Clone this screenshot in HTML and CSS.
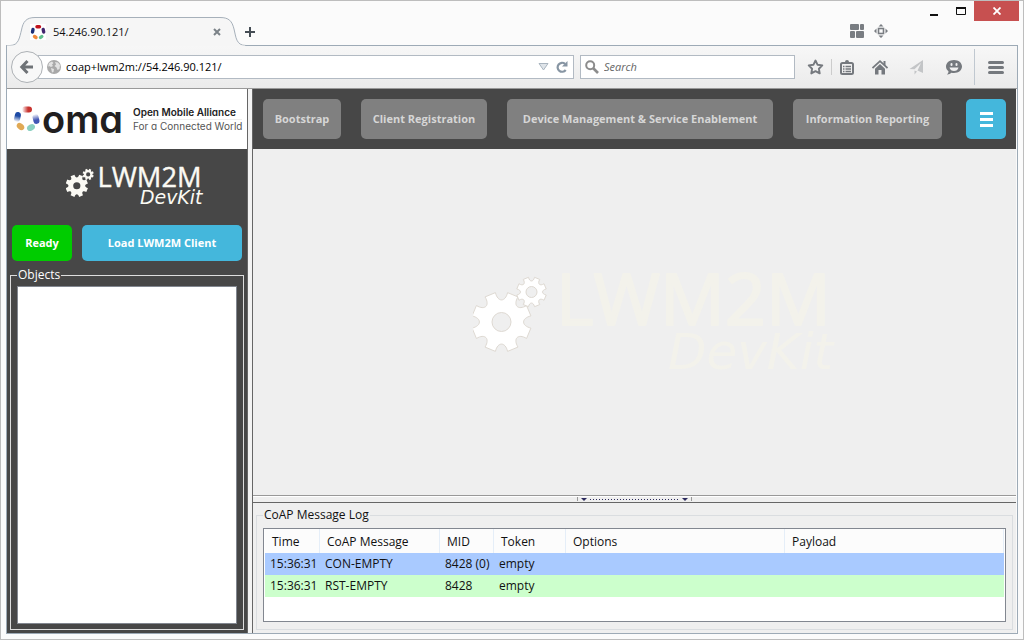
FILE: index.html
```html
<!DOCTYPE html>
<html lang="en">
<head>
<meta charset="utf-8">
<title>54.246.90.121/</title>
<link rel="stylesheet" href="styles.css">
</head>
<body>
<div class="window">
  <header class="titlebar">
    <div class="tab">
      <svg class="tab-shape" width="240" height="29" viewBox="0 0 240 29" aria-hidden="true"><path d="M0 28.5H4C13 28.5 13.500 20 15.500 13C17 5 20 .5 29 .5H214C223 .5 226 4 228 12C230 20 230 28.500 240 28.500V30H0Z" fill="#f6f6f6" stroke="#a6b0ba"/><path d="M1 29H239" stroke="#f6f6f6" stroke-width="1.200"/></svg>
      <svg class="favicon" width="16" height="16" viewBox="0 0 16 16" aria-hidden="true"><rect width="16" height="16" fill="#fff"/><g fill="none" stroke-width="3.400" stroke-linecap="round"><path d="M7 2.700H9.500" stroke="#c1121c"/><path d="M3 5.500L2.500 8" stroke="#1c2f78"/><path d="M13.200 5.500L13.700 8" stroke="#42256e"/><path d="M4.500 12.500L6 13.500" stroke="#f08a3c"/><path d="M11.800 12.500L10.500 13.500" stroke="#5fc08d"/></g></svg>
      <span class="tab-title">54.246.90.121/</span>
      <button class="plain tab-close" aria-label="Close tab"><svg width="8" height="8" viewBox="0 0 8 8"><path d="M1 1L7 7M7 1L1 7" stroke="#7b8288" stroke-width="2"/></svg></button>
    </div>
    <button class="plain new-tab" aria-label="New tab"><svg width="10" height="10" viewBox="0 0 10 10"><path d="M5 0V10M0 5H10" stroke="#454d55" stroke-width="2"/></svg></button>
    <div class="title-right">
      <div class="window-controls">
        <button class="plain" aria-label="Minimize"><svg width="8" height="10" viewBox="0 0 8 10"><path d="M0 9H8" stroke="#111" stroke-width="2"/></svg></button>
        <button class="plain" aria-label="Maximize"><svg width="10" height="8" viewBox="0 0 10 8"><path d="M.5 0V7.500H9.500V0" fill="none" stroke="#111"/><path d="M0 1H10" stroke="#111" stroke-width="2"/></svg></button>
        <button class="plain window-close" aria-label="Close"><svg width="8" height="8" viewBox="0 0 8 8"><path d="M.5 .5L7.500 7.500M7.500 .5L.5 7.500" stroke="#fff" stroke-width="1.800"/></svg></button>
      </div>
      <div class="tab-tools">
        <button class="plain" aria-label="Tab groups"><svg width="14" height="14" viewBox="0 0 14 14" fill="#797d82"><rect width="9" height="6" rx="1"/><rect x="10" width="4" height="6" rx="1"/><rect y="7" width="5" height="7" rx="1"/><rect x="6" y="7" width="8" height="7" rx="1"/></svg></button>
        <button class="plain" aria-label="Fit window"><svg width="14" height="14" viewBox="0 0 14 14" fill="#797d82"><rect x="4.500" y="4.500" width="5" height="5" fill="none" stroke="#797d82" stroke-width="1.600"/><path d="M7 0L9.500 2.500H4.500ZM7 14L9.500 11.500H4.500ZM0 7L2.500 4.500V9.500ZM14 7L11.500 4.500V9.500Z"/></svg></button>
      </div>
    </div>
  </header>

  <div class="frame">
    <div class="toolbar">
      <button class="plain back" aria-label="Back"><svg width="16" height="16" viewBox="0 0 16 16"><path d="M8.500 2L2.800 8L8.500 14M3.500 8H14" fill="none" stroke="#6f7377" stroke-width="3"/></svg></button>
      <div class="field urlbar">
        <svg width="14" height="14" viewBox="0 0 14 14" aria-hidden="true"><circle cx="7" cy="7" r="7" fill="#a9a9a9"/><path d="M2 3L5 1.500L6.500 3L5 4.500L6 6L4 7L2 6L1 7ZM8 2L11 2.500L13 5L12.500 9L10.500 10L9.500 7.500L7.500 6L9 4.500ZM4 8L7 9L6.500 12L5 12.500Z" fill="#e2e2e2"/></svg>
        <input type="text" aria-label="Address" value="coap+lwm2m://54.246.90.121/">
        <button class="plain" aria-label="Show history"><svg width="11" height="8" viewBox="0 0 11 8"><path d="M1 .5H10L5.500 7Z" fill="#dfe4e9" stroke="#a9b4bf"/></svg></button>
        <button class="plain reload" aria-label="Reload"><svg width="12" height="12" viewBox="0 0 12 12"><path d="M9 2.800A4.500 4.500 0 1 0 9.700 9" fill="none" stroke="#8795a3" stroke-width="2.200"/><path d="M11.500 0V5.500H6Z" fill="#8795a3"/></svg></button>
      </div>
      <div class="field search">
        <svg width="14" height="14" viewBox="0 0 14 14" aria-hidden="true"><circle cx="5.200" cy="5.200" r="4" fill="none" stroke="#8c8c8c" stroke-width="2"/><path d="M8 8L13 13" stroke="#8c8c8c" stroke-width="2.600"/></svg>
        <input type="text" aria-label="Search" placeholder="Search">
      </div>
      <button class="plain tool-small" aria-label="Bookmark"><svg width="17" height="16" viewBox="0 0 17 16"><path d="M8.500 1.500L10.600 5.800L15.300 6.400L11.900 9.700L12.700 14.400L8.500 12.200L4.300 14.400L5.100 9.700L1.700 6.400L6.400 5.800Z" fill="none" stroke="#75797e" stroke-width="1.900" stroke-linejoin="round"/></svg></button>
      <span class="sep-small"></span>
      <button class="plain tool-small" aria-label="Bookmarks list"><svg width="14" height="15" viewBox="0 0 14 15"><rect x="1" y="3" width="12" height="11" rx="1.500" fill="none" stroke="#75797e" stroke-width="2"/><path d="M3 2H5Q5 0 7 0T9 2H11V4H3Z" fill="#75797e"/><path d="M3 6.500H4.500M5.500 6.500H11M3 9H4.500M5.500 9H11M3 11.500H4.500M5.500 11.500H11" stroke="#75797e" stroke-width="1.300"/></svg></button>
      <button class="plain tool" aria-label="Home"><svg width="16" height="15" viewBox="0 0 16 15"><path d="M.5 8L8 1.200L15.500 8" fill="none" stroke="#75797e" stroke-width="1.700"/><path d="M11.500 1H13.500V5H11.500ZM8 4L13 8.700V14.500H9.500V10H6.500V14.500H3V8.700Z" fill="#75797e"/></svg></button>
      <button class="plain tool" aria-label="Share"><svg width="15" height="15" viewBox="0 0 15 15"><path d="M14 0V13L8.500 10.500L12 3L5.500 9.300L.5 9Z" fill="#c3c5c7"/><path d="M5.500 10.500L8 11.500L5.500 14.500Z" fill="#c3c5c7"/></svg></button>
      <button class="plain tool" aria-label="Chat"><svg width="16" height="15" viewBox="0 0 16 15"><path d="M8 0C12.500 0 16 2.800 16 6.500S12.500 13 8 13C7 13 6.300 13 5.500 12.700Q3.500 14.700 1 14.500Q2.700 13 2.500 11.200C1 10 0 8.500 0 6.500C0 2.800 3.500 0 8 0Z" fill="#75797e"/><rect x="4.500" y="3" width="2" height="3" rx="1" fill="#f0f0f0"/><rect x="9.500" y="3" width="2" height="3" rx="1" fill="#f0f0f0"/><path d="M3.500 7.500H12.500Q11.500 11 8 11T3.500 7.500Z" fill="#f0f0f0"/></svg></button>
      <span class="sep-tall"></span>
      <button class="plain tool-menu" aria-label="Open menu"><svg width="16" height="13" viewBox="0 0 16 13"><path d="M1.500 1.500H14.500M1.500 6.500H14.500M1.500 11.500H14.500" stroke="#75797e" stroke-width="3" stroke-linecap="round"/></svg></button>
    </div>

    <div class="page">
      <aside class="sidebar">
        <div class="oma">
          <svg width="26" height="26" viewBox="0 0 26 26" aria-hidden="true">
            <defs>
              <linearGradient id="red" x1="0" x2="1"><stop offset="0" stop-color="#fff"/><stop offset=".6" stop-color="#c8342f"/></linearGradient>
              <linearGradient id="blue" x1="0" y1="1" x2="0" y2="0"><stop offset="0" stop-color="#fff"/><stop offset=".6" stop-color="#1d4ba5"/></linearGradient>
              <linearGradient id="navy" x1="0" y1="0" x2="0" y2="1"><stop offset="0" stop-color="#fff"/><stop offset=".6" stop-color="#4256b5"/></linearGradient>
            </defs>
            <rect x="8" y=".5" width="10" height="6" rx="3" fill="url(#red)"/>
            <rect x=".5" y="6" width="6" height="10" rx="3" fill="url(#blue)" transform="rotate(12 3.500 11)"/>
            <rect x="19" y="8" width="6" height="10" rx="3" fill="url(#navy)" transform="rotate(-14 22 13)"/>
            <ellipse cx="6.500" cy="20.500" rx="4.200" ry="3" fill="#e0a955" transform="rotate(42 6.500 20.500)"/>
            <ellipse cx="17" cy="21.500" rx="4.200" ry="3" fill="#8bd0c1" transform="rotate(-28 17 21.500)"/>
          </svg>
          <span class="oma-name">oma</span>
          <div class="oma-text"><span class="oma-title">Open Mobile Alliance</span><span class="oma-tag">For a Connected World</span></div>
        </div>
        <div class="brand">
          <svg class="devkit devkit-small" viewBox="0 -22 372 136">
            <g class="gears"></g>
            <text class="lwm" x="83" y="49">LWM2M</text><text class="kit" x="195" y="93">DevKit</text>
          </svg>
        </div>
        <div class="actions"><button class="btn ready">Ready</button><button class="btn load">Load LWM2M Client</button></div>
        <fieldset class="objects"><legend>Objects</legend><div class="object-list"></div></fieldset>
      </aside>
      <div class="divider"></div>

      <main class="main">
        <nav class="nav">
          <button class="btn step w-boot">Bootstrap</button>
          <button class="btn step w-reg">Client Registration</button>
          <button class="btn step w-dev">Device Management &amp; Service Enablement</button>
          <button class="btn step w-info">Information Reporting</button>
          <button class="btn menu" aria-label="Menu"><svg width="13" height="15" viewBox="0 0 13 15"><path d="M0 1.500H13M0 7.500H13M0 13.500H13" stroke="#fff" stroke-width="3"/></svg></button>
        </nav>
        <section class="canvas">
          <svg class="devkit devkit-big" viewBox="0 -22 372 136">
            <g class="gears"></g>
            <text class="lwm" x="83" y="49">LWM2M</text><text class="kit" x="195" y="93">DevKit</text>
          </svg>
        </section>
        <div class="splitter" role="separator"><span class="tick"></span><span class="arrow"></span><span class="dots"></span><span class="arrow"></span><span class="tick"></span></div>
        <section class="log">
          <fieldset><legend>CoAP Message Log</legend>
            <div class="table-box">
              <table>
                <colgroup><col class="c-time"><col class="c-msg"><col class="c-mid"><col class="c-token"><col><col></colgroup>
                <thead><tr><th>Time</th><th>CoAP Message</th><th>MID</th><th>Token</th><th>Options</th><th>Payload</th></tr></thead>
                <tbody>
                  <tr class="con"><td>15:36:31</td><td>CON-EMPTY</td><td>8428 (0)</td><td>empty</td><td></td><td></td></tr>
                  <tr class="rst"><td>15:36:31</td><td>RST-EMPTY</td><td>8428</td><td>empty</td><td></td><td></td></tr>
                </tbody>
              </table>
            </div>
          </fieldset>
        </section>
      </main>
    </div>
  </div>
</div>
<script src="gears.js"></script>
</body>
</html>
```

FILE: gears.js
```js
// Builds the toothed-wheel outlines used by both DevKit logos.
function gearPath(cx, cy, outer, root, hole) {
  const teeth = 8, step = Math.PI * 2 / teeth;
  const pt = (r, a) => (cx + r * Math.cos(a)).toFixed(2) + " " + (cy + r * Math.sin(a)).toFixed(2);
  let d = "";
  for (let i = 0; i < teeth; i++) {
    const a = (i + 0.5) * step;
    d += (i ? "L" : "M") + pt(outer, a - step * 0.24);
    d += "L" + pt(outer, a + step * 0.24);
    d += "C" + pt(root, a + step * 0.26) + " " + pt(root, a + step * 0.74) + " " + pt(outer, a + step * 0.76);
  }
  d += "ZM" + (cx - hole) + " " + cy + "a" + hole + " " + hole + " 0 1 0 " + 2 * hole + " 0a" + hole + " " + hole + " 0 1 0 " + -2 * hole + " 0Z";
  return d;
}

document.querySelectorAll(".gears").forEach(function (group) {
  group.innerHTML =
    '<path class="gear" fill-rule="evenodd" d="' + gearPath(28.5, 46, 30, 20, 9.5) + '"/>' +
    '<path class="gear" fill-rule="evenodd" d="' + gearPath(58.5, 16, 15, 10, 5.5) + '"/>';
});
```

FILE: styles.css
```css
* { box-sizing: border-box; }
body { margin: 0; font: 12px/16px "Open Sans", "Noto Sans", sans-serif; color: #111; }
button, input { font: inherit; color: inherit; }
.plain { border: 0; padding: 0; background: none; display: flex; align-items: center; justify-content: center; }
svg { display: block; flex: none; }

.window { min-height: 100vh; display: flex; flex-direction: column; border: 1px solid #bdbdbd; padding: 0 5px 5px; background: #fbfbfb; }
.titlebar { display: flex; height: 44px; align-items: flex-end; }
.tab { position: relative; z-index: 1; width: 239px; height: 29px; margin-bottom: -1px; padding: 0 24px; display: flex; align-items: center; }
.tab-shape { position: absolute; left: 0; top: 0; }
.favicon, .tab-title, .tab-close { position: relative; }
.tab-title { flex: 1; margin-left: 7px; font-size: 11px; }
.new-tab { height: 26px; width: 10px; }
.title-right { margin-left: auto; align-self: flex-start; margin-right: -1px; }
.window-controls { display: flex; justify-content: flex-end; }
.window-controls button { width: 27px; height: 20px; }
.window-controls .window-close { width: 45px; background: #c75050; }
.tab-tools { display: flex; padding-right: 126px; padding-top: 2px; }
.tab-tools button { width: 24px; height: 16px; }

.frame { flex: 1; display: flex; flex-direction: column; border: 1px solid #9daab6; }
.toolbar { height: 43px; display: flex; align-items: center; padding-left: 4px; border-bottom: 1px solid #999; background: linear-gradient(#f7f7f7, #ebebeb); }
.back { position: relative; z-index: 1; width: 32px; height: 32px; border: 1px solid #adb1b5; border-radius: 50%; background: #f8f8f8; }
.field { height: 24px; display: flex; align-items: center; border: 1px solid #b2bac3; background: #fff; }
.field input { flex: 1; min-width: 0; border: 0; padding: 0; background: none; outline: 0; font-size: 11px; color: #000; }
.urlbar { flex: 1; margin-left: -5px; padding: 0 5px 0 8px; gap: 5px; }
.reload { margin-left: 2px; }
.search { width: 215px; margin: 0 6px; padding: 0 4px; gap: 5px; }
.search input::placeholder { color: #666; font-style: italic; opacity: 1; }
.tool-small { width: 29px; height: 30px; }
.tool { width: 37px; height: 30px; }
.tool-menu { width: 42px; height: 30px; }
.sep-small { width: 1px; height: 16px; margin-left: 1px; background: #ccc; }
.sep-tall { width: 1px; height: 36px; margin-left: 2px; background: #c0c8d0; }

.page { flex: 1; display: flex; background: #efefef; }
.sidebar { width: 240px; display: flex; flex-direction: column; background: #474747; color: #fff; }
.oma { height: 60px; display: flex; align-items: center; padding-left: 7px; background: #fff; font-family: Inter, sans-serif; font-feature-settings: "cv11"; }
.oma-name { margin-left: 2px; width: 84px; font-size: 38px; font-weight: 600; line-height: 44px; color: #211e20; }
.oma-text { margin-left: 7px; display: flex; flex-direction: column; font-size: 10px; line-height: 13px; white-space: nowrap; }
.oma-title { color: #222; font-weight: 600; border-bottom: 1px solid #eee; }
.oma-tag { color: #555; }
.brand { height: 76px; padding: 11px 0 0 59px; }
.devkit-small { width: 141px; fill: #fbfaf4; }
.devkit-big { width: 372px; fill: #f3f2eb; }
.devkit-big .gear { fill: #fff; stroke: #ded9d2; }
.lwm { font-size: 72px; stroke: #fbfaf4; stroke-width: 1px; stroke-linejoin: round; }
.devkit-big .lwm { stroke: #f3f2eb; stroke-width: 2px; }
.kit { font-family: "DejaVu Sans", sans-serif; font-size: 50px; font-style: italic; }
.btn { border: 0; border-radius: 5px; padding: 0; color: #fff; font-size: 11px; font-weight: 700; white-space: nowrap; }
.actions { display: flex; gap: 10px; padding: 0 5px; }
.actions .btn { height: 36px; }
.ready { width: 60px; background: #00cc00; }
.load { flex: 1; background: #44b7dc; }
fieldset { min-width: 0; margin: 0; display: flex; flex-direction: column; }
legend { padding: 0 1px; }
.objects { flex: 1; margin: 6px 3px 3px; padding: 3px 6px 5px; border: 1px solid #ddd; }
.object-list { flex: 1; height: 100%; background: #fff; border: 1px solid #828790; }
.divider { width: 6px; border: solid; border-width: 0 1px; border-color: #888 #666; background: #f3f3f3; }

.main { flex: 1; min-width: 0; display: flex; flex-direction: column; border-right: 1px solid #fafafa; }
.nav { height: 60px; display: flex; align-items: center; gap: 20px; padding: 0 10px; background: #474747; }
.nav .btn { height: 40px; }
.step { background: #808080; color: #d6d6d6; }
.w-boot { width: 78px; }
.w-reg { width: 126px; }
.w-dev { width: 266px; }
.w-info { width: 149px; }
.menu { width: 40px; margin-left: auto; display: grid; place-items: center; background: #44b7dc; }
.canvas { flex: 1; display: flex; align-items: center; justify-content: center; padding-left: 48px; }
.splitter { height: 8px; display: flex; gap: 3px; align-items: center; justify-content: center; border-top: 1px solid #999; border-bottom: 1px solid #666; box-shadow: inset 0 1px #fff; }
.tick { width: 1px; height: 4px; background: #999; }
.arrow { border: solid transparent; border-width: 3px 3px 0; border-top-color: #2c2a5c; }
.dots { width: 89px; height: 1px; background: repeating-linear-gradient(90deg, #2c2a5c 0 1px, transparent 1px 3px); }
.log { padding: 4px 3px 3px; }
.log fieldset { padding: 5px 6px 7px; border: 1px solid #dadde0; }
.table-box { height: 94px; padding: 0 1px; border: 1px solid #828790; background: #fff; }
table { width: 100%; table-layout: fixed; border-collapse: separate; border-spacing: 0; text-align: left; }
th { height: 24px; padding: 2px 0 0 7px; font-weight: 400; background: #fcfcfc; border-right: 1px solid #e5eef8; }
td { height: 22px; padding: 0 0 0 5px; }
.c-time { width: 55px; }
.c-msg { width: 120px; }
.c-mid { width: 54px; }
.c-token { width: 72px; }
.con { background: #a9caff; }
.rst { background: #ccffcc; }
```
